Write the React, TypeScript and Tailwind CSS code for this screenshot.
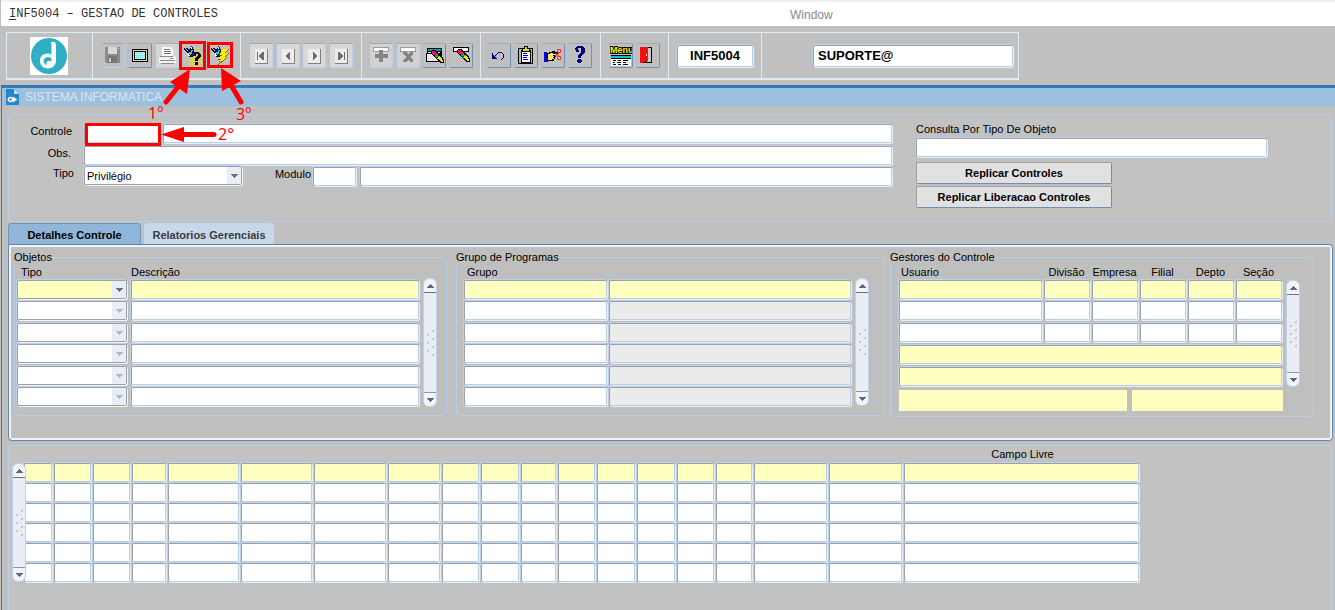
import { useState, type ReactNode } from "react";
import clsx from "clsx";

const FIELD =
  "block h-[19px] rounded-[2px] border border-[#b8cde6] border-t-[#9aa1ab] border-l-[#9aa1ab] px-1 text-[11px] text-black shadow-[1px_1px_0_#e6eef8,-1px_-1px_0_#bfd1e8] outline-none";

// ── Fields ─────────────────────────────────────────────────────────────
interface FieldProps {
  label?: string;
  id?: string;
  tone?: "white" | "yellow" | "gray";
  className?: string;
  value?: string;
}

function Field({ label, id, tone = "white", className, value }: FieldProps) {
  return (
    <input
      id={id}
      type="text"
      aria-label={label}
      defaultValue={value}
      className={clsx(
        FIELD,
        tone === "white" && "bg-white",
        tone === "yellow" && "bg-[#ffffc0]",
        tone === "gray" && "bg-[#ebebeb]",
        className,
      )}
    />
  );
}

interface DropDownProps {
  id?: string;
  label?: string;
  options: string[];
  active?: boolean;
  disabled?: boolean;
  className?: string;
}

function DropDown({ id, label, options, active, disabled, className }: DropDownProps) {
  return (
    <div className={clsx("relative", className)}>
      <select
        id={id}
        aria-label={label}
        disabled={disabled}
        className={clsx(
          "block h-[19px] w-full appearance-none rounded-[2px] border border-[#9aa1ab] pl-0.5 text-[11px] leading-4 text-black opacity-100 shadow-[1px_1px_0_#f0f4fa,-1px_-1px_0_#bfd1e8] outline-none",
          active ? "bg-[#ffffc0]" : "bg-white",
        )}
      >
        {options.map((option) => (
          <option key={option}>{option}</option>
        ))}
      </select>
      <span className="pointer-events-none absolute top-px right-px flex h-[17px] w-[14px] items-center justify-center bg-[#e9eef6]">
        <svg width="7" height="4" className={disabled ? "text-[#b4b8c0]" : "text-[#6a6f88]"} shapeRendering="crispEdges">
          <path d="M0 0h7v1h-1v1h-1v1h-1v1h-1v-1h-1v-1h-1v-1h-1z" fill="currentColor" />
        </svg>
      </span>
    </div>
  );
}

// ── Scroll bar ─────────────────────────────────────────────────────────
function ScrollBar({ className }: { className?: string }) {
  return (
    <div className={clsx("flex w-[14px] shrink-0 flex-col justify-between rounded-[6px] border border-[#bfd1e8] bg-[#e8edf6]", className)}>
      <button aria-label="Subir" className="flex h-[14px] items-center justify-center rounded-t-[6px] border-b border-[#6a6f88] bg-[#f1f5fa]">
        <svg width="7" height="4" shapeRendering="crispEdges">
          <path d="M3 0h1v1h1v1h1v1h1v1H0V3h1V2h1V1h1z" fill="#5f6480" />
        </svg>
      </button>
      <svg width="12" height="28" viewBox="0 0 12 28">
        {[1, 9, 17, 25].map((y) => (
          <path key={y} d={`M8 ${y + 2}l2-2`} stroke="#8aa4c4" strokeWidth="1" />
        ))}
        {[5, 13, 21].map((y) => (
          <path key={y} d={`M3 ${y + 2}l2-2`} stroke="#8aa4c4" strokeWidth="1" />
        ))}
      </svg>
      <button aria-label="Descer" className="flex h-[14px] items-center justify-center rounded-b-[6px] border-t border-[#7f9dc0] bg-[#f1f5fa]">
        <svg width="7" height="4" shapeRendering="crispEdges">
          <path d="M0 0h7v1h-1v1h-1v1h-1v1h-1v-1h-1v-1h-1v-1h-1z" fill="#5f6480" />
        </svg>
      </button>
    </div>
  );
}

// ── Toolbar ────────────────────────────────────────────────────────────
function ToolButton({ label, muted, children }: { label: string; muted?: boolean; children: ReactNode }) {
  return (
    <button
      aria-label={label}
      className={clsx(
        "h-[25px] w-6 rounded-[2px] border border-t-[#a4a8ae] border-l-[#b0bfd2]",
        muted ? "border-r-[#bfd1e8] border-b-[#bfd1e8]" : "border-r-[#6f90b4] border-b-[#6f90b4]",
      )}
    >
      <svg width="22" height="23" viewBox="0 0 22 23" shapeRendering="crispEdges">
        {children}
      </svg>
    </button>
  );
}

function ToolGroup({ className, children }: { className: string; children: ReactNode }) {
  return (
    <div className={clsx("flex items-center justify-between border-r border-[#dfeaf7]", className)}>
      {children}
    </div>
  );
}

function Flashlight() {
  return (
    <>
      <path d="M2 4h1v1h1v1h1v1h1v-1h1v-1h1v-1h1v-2h1v1h1v2h1v2h1v5h-2v1h-4v-1h-1v-3h-1v-1h-1v-1h-1v-1h-1z" fill="#101018" />
      <path d="M4 4h2v1h1v1h-2v-1h-1z" fill="#0000c8" />
      <path d="M9 3h1v2h-1z" fill="#fff" />
      <path d="M7 8h2v-2h2v1h-1v3h-1v1h-1v-1h-1z" fill="#00e0f8" />
      <path d="M6 9h1v2h1v1h-2z" fill="#fff" />
      <path d="M10 8h1v-1h1v4h-2z" fill="#0000d8" />
    </>
  );
}

function NavIcon({ d }: { d: string }) {
  return (
    <>
      <rect x="0" y="0" width="22" height="23" fill="#d8d8d8" />
      <rect x="5" y="5" width="13" height="15" fill="#808080" />
      <rect x="5" y="5" width="12" height="14" fill="#ececec" />
      <path d={d} fill="#6c6c6c" />
    </>
  );
}

function Pencil({ x, y }: { x: number; y: number }) {
  return (
    <g transform={`translate(${x} ${y})`}>
      <path d="M0 1h1v-1h4v1h1v1h1v1h1v1h1v1h1v1h1v1h1v2h1v4h-4v-1h-1v-1h-1v-1h-1v-1h-1v-1h-1v-1h-1v-1h-1v-1h-1v-1h-1z" fill="#000" />
      <path d="M1 1h3v1h1v1h-1v1h-1v1h-1v-1h-1z" fill="#f000a0" />
      <path d="M3 4h1v-1h2v1h1v1h-2v1h-1v-1h-1z" fill="#ff2010" />
      <path d="M4 6h1v-1h2v1h1v1h-2v1h-1v-1h-1z" fill="#00b060" />
      <path d="M6 8h1v-1h1v-1h1v1h1v1h1v2h1v2h-2v-1h-1v-1h-1v-1h-2z" fill="#f0e800" />
    </g>
  );
}

function Logo() {
  return (
    <svg width="38" height="38" viewBox="0 0 38 38" role="img" aria-label="Logo">
      <rect width="38" height="38" fill="#fff" />
      <circle cx="19" cy="19" r="18" fill="#2fafc5" />
      <path d="M20.500 5.500c3.500-1.500 5.500-.5 5.500 3v14.500c0 5.500-3.500 8.500-8 8.500-4.800 0-8-3.200-8-7.500 0-4.500 3-7.500 7.500-7.500 1.500 0 3 .5 4 1.500V9c0-1.800-.2-2.800-1-3.500z" fill="#fff" />
      <path d="M21.800 23.500c0-2-1.500-3.500-3.800-3.500-2.600 0-4.500 1.700-4.500 4 0 1.900 1.300 3.500 3.200 4-.8-2 0-4 2-4 1 0 2 .3 3.100-.5z" fill="#2fafc5" />
    </svg>
  );
}

function Toolbar() {
  return (
    <div className="my-1.5 mb-[5px] ml-1.5 flex h-12 w-[1013px] border border-[#dfeaf7] border-b-2">
      <div className="flex w-[86px] items-center border-r border-[#dfeaf7] pl-[23px]">
        <Logo />
      </div>
      <ToolGroup className="w-[148px] px-2">
        <ToolButton label="Salvar" muted>
          <path d="M3 3h15v16h-14v-1h-1z" fill="#8a8a8a" />
          <rect x="6" y="3" width="9" height="7" fill="#d8d8d8" />
          <rect x="6" y="12" width="9" height="7" fill="#777" />
          <rect x="7" y="14" width="2" height="4" fill="#c8c8c8" />
          <rect x="16" y="4" width="1" height="1" fill="#ddd" />
        </ToolButton>
        <ToolButton label="Tela">
          <rect x="3" y="5" width="16" height="13" rx="1" fill="#000" />
          <rect x="4" y="6" width="14" height="11" fill="#d4d4d4" />
          <rect x="5" y="7" width="12" height="9" fill="#000" />
          <rect x="6" y="8" width="10" height="7" fill="#8ee8e8" />
          {[8, 10, 12, 14].map((y) => (
            <path key={y} d={`M6 ${y + 0.5}h10`} stroke="#fff" strokeDasharray="1 1" />
          ))}
        </ToolButton>
        <ToolButton label="Imprimir" muted>
          <rect width="22" height="23" fill="#d6d6d6" />
          <path d="M6 3h9v1h1v1h1v7h-11z" fill="#fafafa" />
          <path d="M8 5.500h6M8 7.500h7M8 9.500h7" stroke="#777" />
          <path d="M4 12h15v1h1v6h-2v1h-13v-1h-2v-6h1z" fill="#f4f4f4" />
          <path d="M4 12.500h13M4 16.500h15M5 19.500h13" stroke="#8a8a8a" />
          <path d="M14 14.500h3" stroke="#888" />
        </ToolButton>
        <ToolButton label="Entrar consulta">
          <Flashlight />
          {[7, 9, 11, 13, 15, 17, 19, 21].map((y) => (
            <path key={y} d={`M${y > 12 ? 8 : 12} ${y + 0.5}h${y > 12 ? 12 : 8}`} stroke="#f0e000" strokeDasharray="1 1" />
          ))}
          <path d="M11 10h1v-1h1v-1h4v1h1v1h1v3h-1v1h-1v1h-1v2h-3v-3h1v-1h1v-1h1v-2h-2v2h-3zM13 18h3v3h-3z" fill="#000" />
        </ToolButton>
        <ToolButton label="Executar consulta">
          <Flashlight />
          <path d="M13 5h7l-3 4h3l-4 4h2l-4 4h1l-6 4 2-5h-2l3-4h-2z" fill="#706800" />
          <path d="M13 5h6l-3 4h3l-4 4h2l-4 4-3 2 2-4h-2l3-4h-2z" fill="#ffee00" />
        </ToolButton>
      </ToolGroup>
      <ToolGroup className="w-[121px] px-2">
        <ToolButton label="Primeiro" muted><NavIcon d="M7 8h1v8h-1zM12 8h2v8h-2v-1h-1v-1h-1v-1h-1v-2h1v-1h1v-1h1z" /></ToolButton>
        <ToolButton label="Anterior" muted><NavIcon d="M12 8h1v8h-1v-1h-1v-1h-1v-1h-1v-2h1v-1h1v-1h1z" /></ToolButton>
        <ToolButton label="Seguinte" muted><NavIcon d="M10 8h1v1h1v1h1v1h1v2h-1v1h-1v1h-1v1h-1z" /></ToolButton>
        <ToolButton label="Ultimo" muted><NavIcon d="M8 8h2v1h1v1h1v1h1v2h-1v1h-1v1h-1v1h-2zM14 8h1v8h-1z" /></ToolButton>
      </ToolGroup>
      <ToolGroup className="w-[119px] px-[7px]">
        <ToolButton label="Inserir" muted>
          <rect width="22" height="23" fill="#d2d2d2" />
          <path d="M3 3h16v5h-16z" fill="#999" />
          <path d="M4 4h14v3h-14z" fill="#fff" />
          <path d="M9 6h4v4h5v4h-5v4h-4v-4h-4v-4h4z" fill="#858585" />
        </ToolButton>
        <ToolButton label="Remover" muted>
          <rect width="22" height="23" fill="#d2d2d2" />
          <path d="M3 3h16v5h-16z" fill="#999" />
          <path d="M4 4h14v3h-14z" fill="#fff" />
          <path d="M6 8h3l2 2 2-2h3v2l-3 3 3 3v2h-3l-2-2-2 2h-3v-2l3-3-3-3z" fill="#858585" />
        </ToolButton>
        <ToolButton label="Limpar bloco">
          <path d="M4 4h15v8h-2v6h-14v-9h1z" fill="#000" />
          <path d="M5 5h13v2h-13z" fill="#00a0a0" />
          <path d="M4 10h11v7h-11zM5 8h12v1h-12z" fill="#e8e8e8" />
          <Pencil x={8} y={6} />
        </ToolButton>
        <ToolButton label="Limpar registro">
          <path d="M3 3h16v5h-16z" fill="#000" />
          <path d="M4 4h14v3h-14z" fill="#fff" />
          <Pencil x={7} y={5} />
        </ToolButton>
      </ToolGroup>
      <ToolGroup className="w-[120px] pr-2 pl-1.5">
        <ToolButton label="Desfazer">
          <path d="M4 9h1v2h1v1h1v1h1v1h1v1h-5zM7 11h1v-1h1v-1h1v-1h4v1h1v1h1v4h-1v1h-1v1h-1v-1h1v-1h1v-4h-1v-1h-4v1h-1v1h-1v1h-1z" fill="#000080" />
        </ToolButton>
        <ToolButton label="Colar">
          <path d="M3 4h15v16h-15z" fill="#000" />
          <path d="M4 5h13v14h-13z" fill="#b8b8b8" />
          <path d="M6 6h9v12h-9z" fill="#fff" stroke="#000" />
          <path d="M7 4h2v-2h3v2h2v3h-7z" fill="#e8e000" stroke="#000" />
          <path d="M8 9.500h4M8 11.500h5M8 13.500h4M8 15.500h5" stroke="#0000e0" />
        </ToolButton>
        <ToolButton label="Cortar">
          <path d="M2 8h3v10h-3z" fill="#0000d8" />
          <path d="M5 9h2v-1h3v-1h3v1h3v3h-2v2h-1v2h-1v2h-6v1h-1z" fill="#000" />
          <path d="M6 10h2v-1h3v1h4v1h-4v1h1v1h-1v1h1v1h-2v1h-4z" fill="#ffe860" />
          <path d="M15.500 5.500h3v3h-3zM15.500 12.500h3v3h-3zM13 12l4-3M13 9l4 3" fill="none" stroke="#ff2a20" shapeRendering="auto" />
        </ToolButton>
        <ToolButton label="Ajuda">
          <path d="M6 4h1v-1h1v-1h6v1h1v1h1v5h-1v1h-1v1h-1v1h-1v2h-3v-3h1v-1h1v-1h1v-5h-3v2h1v2h-3zM9 15h3v1h1v2h-1v1h-3v-1h-1v-2h1z" fill="#000080" />
        </ToolButton>
      </ToolGroup>
      <ToolGroup className="w-[68px] px-2">
        <ToolButton label="Menu">
          <text x="0" y="9" className="font-['Liberation_Sans'] text-[9px] font-bold" fill="#ffee00" stroke="#000" strokeWidth="2" paintOrder="stroke">Menu</text>
          <rect x="1" y="11" width="20" height="11" fill="#000" />
          <rect x="1" y="12" width="20" height="2" fill="#00c8d0" />
          <rect x="1" y="15" width="20" height="7" fill="#fff" />
          <path d="M3 16.500h3M8 16.500h3M13 16.500h5M3 18.500h2M7 18.500h4M13 18.500h3M3 20.500h3M8 20.500h3M13 20.500h5" stroke="#000" />
        </ToolButton>
        <ToolButton label="Sair">
          <path d="M3 3h12v16h-12z" fill="#000" />
          <path d="M10 4h4v14h-4z" fill="#c8c8c8" />
          <path d="M3 3h8v14h-3v1h-2v1h-3z" fill="#f01010" />
          <path d="M9 10h1v2h-1z" fill="#fff" />
        </ToolButton>
      </ToolGroup>
      <ToolGroup className="w-[93px] px-2">
        <Field label="Programa" value="INF5004" className="h-[22px] w-full text-center text-[13px] font-bold" />
      </ToolGroup>
      <div className="flex flex-1 items-center justify-end pr-[5px]">
        <Field label="Usuario conectado" value="SUPORTE@" className="h-[22px] w-[200px] px-0.5 text-[13px] font-bold" />
      </div>
    </div>
  );
}

// ── Header form ────────────────────────────────────────────────────────
const ACTION =
  "h-[22px] w-[196px] rounded-[2px] border border-t-[#a0a0a0] border-r-[#6f8fb2] border-b-[#6f8fb2] border-l-[#a0a0a0] bg-[#e1e1e1] font-bold";

function ControlForm() {
  return (
    <section className="flex h-[108px] gap-6 rounded-[4px] border border-[#b9cee8] bg-[#c2c2c2] pt-[7px]">
      <div className="w-[883px] shrink-0">
        <div className="flex h-[22px] items-start">
          <label htmlFor="controle" className="w-[63px] pt-px text-right leading-4">Controle</label>
          <Field id="controle" className="mt-0.5 ml-3 w-[76px]" />
          <Field label="Nome do controle" className="mt-0.5 ml-[3px] flex-1" />
        </div>
        <div className="flex h-[21px] items-start">
          <label htmlFor="obs" className="w-[62px] pt-px text-right leading-4">Obs.</label>
          <Field id="obs" className="mt-0.5 ml-[13px] flex-1" />
        </div>
        <div className="flex h-[21px] items-start">
          <label htmlFor="tipo" className="w-[65px] text-right leading-4">Tipo</label>
          <DropDown id="tipo" options={["Privilégio"]} className="mt-px ml-2.5 w-[158px]" />
          <label htmlFor="modulo" className="ml-1 w-[65px] pt-px text-right leading-4">Modulo</label>
          <Field id="modulo" className="mt-0.5 ml-0.5 w-[43px]" />
          <Field label="Nome do modulo" className="mt-0.5 ml-1 flex-1" />
        </div>
      </div>
      <div className="flex flex-col items-start">
        <label htmlFor="consulta" className="mb-0.5 leading-[14px]">Consulta Por Tipo De Objeto</label>
        <Field id="consulta" className="w-[351px]" />
        <button className={clsx(ACTION, "mt-[5px]")}>Replicar Controles</button>
        <button className={clsx(ACTION, "mt-0.5")}>Replicar Liberacao Controles</button>
      </div>
    </section>
  );
}

// ── Detail blocks ──────────────────────────────────────────────────────
const ROWS = [0, 1, 2, 3, 4, 5];
const FIELDSET = "min-w-0 shrink-0 rounded-[4px] border border-[#b9cee8]";
const LEGEND = "-ml-px h-[14px] leading-[14px]";
const TH = "p-0 align-top text-left font-normal leading-4";

function ObjectsBlock() {
  return (
    <fieldset className={clsx(FIELDSET, "w-[433px] pb-1.5")}>
      <legend className={LEGEND}>Objetos</legend>
      <div className="flex gap-[3px] pl-0.5">
        <table className="w-[403px] table-fixed border-collapse">
          <colgroup>
            <col className="w-[114px]" />
            <col className="w-[289px]" />
          </colgroup>
          <thead>
            <tr className="h-4">
              <th className={clsx(TH, "pl-1")}>Tipo</th>
              <th className={TH}>Descrição</th>
            </tr>
          </thead>
          <tbody>
            {ROWS.map((row) => (
              <tr key={row} className="odd:h-[21px] even:h-[22px]">
                <td className="p-0 pr-1 align-top">
                  <DropDown label={`Tipo ${row + 1}`} options={[""]} active={row === 0} disabled={row > 0} />
                </td>
                <td className="p-0 pr-px align-top">
                  <Field label={`Descrição ${row + 1}`} tone={row === 0 ? "yellow" : "white"} className="w-full" />
                </td>
              </tr>
            ))}
          </tbody>
        </table>
        <ScrollBar className="mt-[14px] h-[129px]" />
      </div>
    </fieldset>
  );
}

function GroupsBlock() {
  return (
    <fieldset className={clsx(FIELDSET, "w-[428px] pb-1.5")}>
      <legend className={LEGEND}>Grupo de Programas</legend>
      <div className="flex gap-1 pl-[7px]">
        <table className="w-[387px] table-fixed border-collapse">
          <colgroup>
            <col className="w-[145px]" />
            <col className="w-[242px]" />
          </colgroup>
          <thead>
            <tr className="h-4">
              <th className={clsx(TH, "pl-[3px]")}>Grupo</th>
              <th className={TH} aria-label="Nome do grupo" />
            </tr>
          </thead>
          <tbody>
            {ROWS.map((row) => (
              <tr key={row} className="odd:h-[21px] even:h-[22px]">
                <td className="p-0 pr-0.5 align-top">
                  <Field label={`Grupo ${row + 1}`} tone={row === 0 ? "yellow" : "white"} className="w-full" />
                </td>
                <td className="p-0 align-top">
                  <Field label={`Nome do grupo ${row + 1}`} tone={row === 0 ? "yellow" : "gray"} className="w-full" />
                </td>
              </tr>
            ))}
          </tbody>
        </table>
        <ScrollBar className="mt-[14px] h-[128px]" />
      </div>
    </fieldset>
  );
}

const MANAGER_COLUMNS = ["Usuario", "Divisão", "Empresa", "Filial", "Depto", "Seção"];

function ManagersBlock() {
  return (
    <fieldset className={clsx(FIELDSET, "w-[424px] pb-[5px]")}>
      <legend className={LEGEND}>Gestores do Controle</legend>
      <div className="flex gap-0.5 pl-2">
        <table className="w-[385px] table-fixed border-collapse">
          <colgroup>
            <col className="w-[145px]" />
            <col span={5} className="w-[48px]" />
          </colgroup>
          <thead>
            <tr className="h-4">
              {MANAGER_COLUMNS.map((name, i) => (
                <th key={name} className={clsx("p-0 align-top leading-4 font-normal", i === 0 ? "pl-0.5 text-left" : "pr-[3px] text-center")}>
                  {name}
                </th>
              ))}
            </tr>
          </thead>
          <tbody>
            {[0, 1, 2].map((row) => (
              <tr key={row} className="h-[22px] first:h-[21px]">
                {MANAGER_COLUMNS.map((name) => (
                  <td key={name} className="p-0 pr-0.5 align-top">
                    <Field label={`${name} ${row + 1}`} tone={row === 0 ? "yellow" : "white"} className="w-full" />
                  </td>
                ))}
              </tr>
            ))}
            {["Nome do usuario", "Nome da empresa"].map((name) => (
              <tr key={name} className="h-[22px]">
                <td colSpan={6} className="p-0 pr-0.5 align-top">
                  <Field label={name} tone="yellow" className="w-full" />
                </td>
              </tr>
            ))}
          </tbody>
        </table>
        <ScrollBar className="mt-4 h-[107px]" />
      </div>
      <div className="flex gap-[5px] pt-px pl-2">
        <input type="text" aria-label="Departamento" className="h-[21px] w-[228px] bg-[#ffffc0]" />
        <input type="text" aria-label="Nome da seção" className="h-[21px] w-[151px] bg-[#ffffc0]" />
      </div>
    </fieldset>
  );
}

function DetailTabs() {
  const [tab, setTab] = useState(0);

  return (
    <section className="mt-px">
      <div role="tablist" className="flex h-[21px] gap-[3px] font-bold">
        {["Detalhes Controle", "Relatorios Gerenciais"].map((name, i) => (
          <button
            key={name}
            role="tab"
            aria-selected={tab === i}
            onClick={() => setTab(i)}
            className={clsx(
              "rounded-t-[4px] border border-b-0 pt-0.5",
              i === 0 ? "w-[133px]" : "w-[130px]",
              tab === i ? "border-[#6f93b8] bg-[#8fb5d8] text-black" : "border-[#c9d7ea] bg-[#c9d7ea] text-[#3c3c3c]",
            )}
          >
            {name}
          </button>
        ))}
      </div>
      <div
        role="tabpanel"
        className="flex h-[197px] items-start rounded-tr-[4px] rounded-b-[4px] border border-[#6488ad] bg-[#bfbfbf] pt-[5px] pl-[5px] shadow-[inset_0_0_0_2px_#eef3f9]"
      >
        <ObjectsBlock />
        <div className="ml-[9px]"><GroupsBlock /></div>
        <div className="ml-1.5"><ManagersBlock /></div>
      </div>
    </section>
  );
}

// ── Free fields grid ───────────────────────────────────────────────────
const FREE_COLUMNS = [30, 39, 39, 36, 73, 73, 74, 54, 39, 40, 37, 39, 40, 40, 39, 38, 75, 75, 237];

function FreeFields() {
  return (
    <section className="mt-1 flex flex-1 items-start rounded-t-[4px] border border-b-0 border-[#b9cee8] bg-[#c2c2c2] pl-[3px]">
      <ScrollBar className="relative z-10 mt-[17px] h-[119px]" />
      <table className="-ml-0.5 w-[1117px] table-fixed border-collapse">
        <colgroup>
          {FREE_COLUMNS.map((width, i) => (
            <col key={i} style={{ width }} />
          ))}
        </colgroup>
        <thead>
          <tr className="h-[17px]">
            {FREE_COLUMNS.map((_, i) => (
              <th key={i} className="p-0 align-top leading-4 font-normal">
                {i === FREE_COLUMNS.length - 1 ? "Campo Livre" : null}
              </th>
            ))}
          </tr>
        </thead>
        <tbody>
          {ROWS.map((row) => (
            <tr key={row} className="h-5">
              {FREE_COLUMNS.map((_, i) => (
                <td key={i} className="p-0 pr-0.5 align-top">
                  <Field
                    label={`Campo ${i + 1}, linha ${row + 1}`}
                    tone={row === 0 ? "yellow" : "white"}
                    className="h-[18px] w-full"
                  />
                </td>
              ))}
            </tr>
          ))}
        </tbody>
      </table>
    </section>
  );
}

// Numbered steps drawn on top of the form
function StepMarks() {
  return (
    <svg width="270" height="150" className="pointer-events-none absolute top-0 left-0" fill="none" stroke="#ff0000">
      <rect x="180.500" y="42.500" width="24" height="26" strokeWidth="3" />
      <rect x="208.500" y="43.500" width="23" height="23" strokeWidth="3" />
      <rect x="86.500" y="124.500" width="73" height="20" strokeWidth="3" />
      <g strokeWidth="5" strokeLinecap="round">
        <path d="M178 87L166 102" />
        <path d="M231 85L241 102" />
        <path d="M183 134.500H214" />
      </g>
      <g fill="#ff0000" stroke="none">
        <path d="M190 69L170 82L187 94Z" />
        <path d="M221 68L222 91L241 81Z" />
        <path d="M161 134.500L184 127V142Z" />
        <g className="font-['Open_Sans'] text-[16px]">
          <text x="148" y="119">1º</text>
          <text x="218" y="140">2°</text>
          <text x="236" y="120">3º</text>
        </g>
      </g>
    </svg>
  );
}

export default function App() {
  return (
    <div className="relative flex min-h-screen flex-col overflow-hidden bg-[#c0c0c0] font-['Liberation_Sans',Arial,sans-serif] text-[11px] text-black">
      <header className="ml-px grid h-[26px] grid-cols-2 items-center border-t-2 border-[#f2f2f2] bg-white pl-2">
        <h1 className="font-['Liberation_Mono',monospace] text-[12px] text-[#333]">
          <span className="underline underline-offset-2">I</span>NF5004 – GESTAO DE CONTROLES
        </h1>
        <div className="pt-0.5 pl-[118px] text-[12px] text-[#8a8a8a]">Window</div>
      </header>
      <Toolbar />
      <main className="ml-px flex flex-1 flex-col border-t border-l border-[#4f7096]">
        <div className="flex h-[20px] items-center gap-1.5 border-t-2 border-[#2b80bf] bg-[#9dc0df] pl-1">
          <svg width="13" height="16" viewBox="0 0 13 16">
            <path d="M0 0h8l5 5v11h-13z" fill="#2687c8" />
            <path d="M8 0v5h5z" fill="#bfe0f5" />
            <circle cx="4.500" cy="10.500" r="2" fill="none" stroke="#fff" strokeWidth="1.500" />
            <path d="M1 10.500h2M7 8l4 2.500-4 2.500z" fill="#fff" stroke="#fff" strokeWidth="0.500" />
          </svg>
          <h2 className="text-[12px] text-[#d9e6f2]">SISTEMA INFORMATICA</h2>
        </div>
        <div className="flex flex-1 flex-col pt-2 pr-0.5 pl-1.5">
          <ControlForm />
          <DetailTabs />
          <FreeFields />
        </div>
      </main>
      <StepMarks />
    </div>
  );
}
